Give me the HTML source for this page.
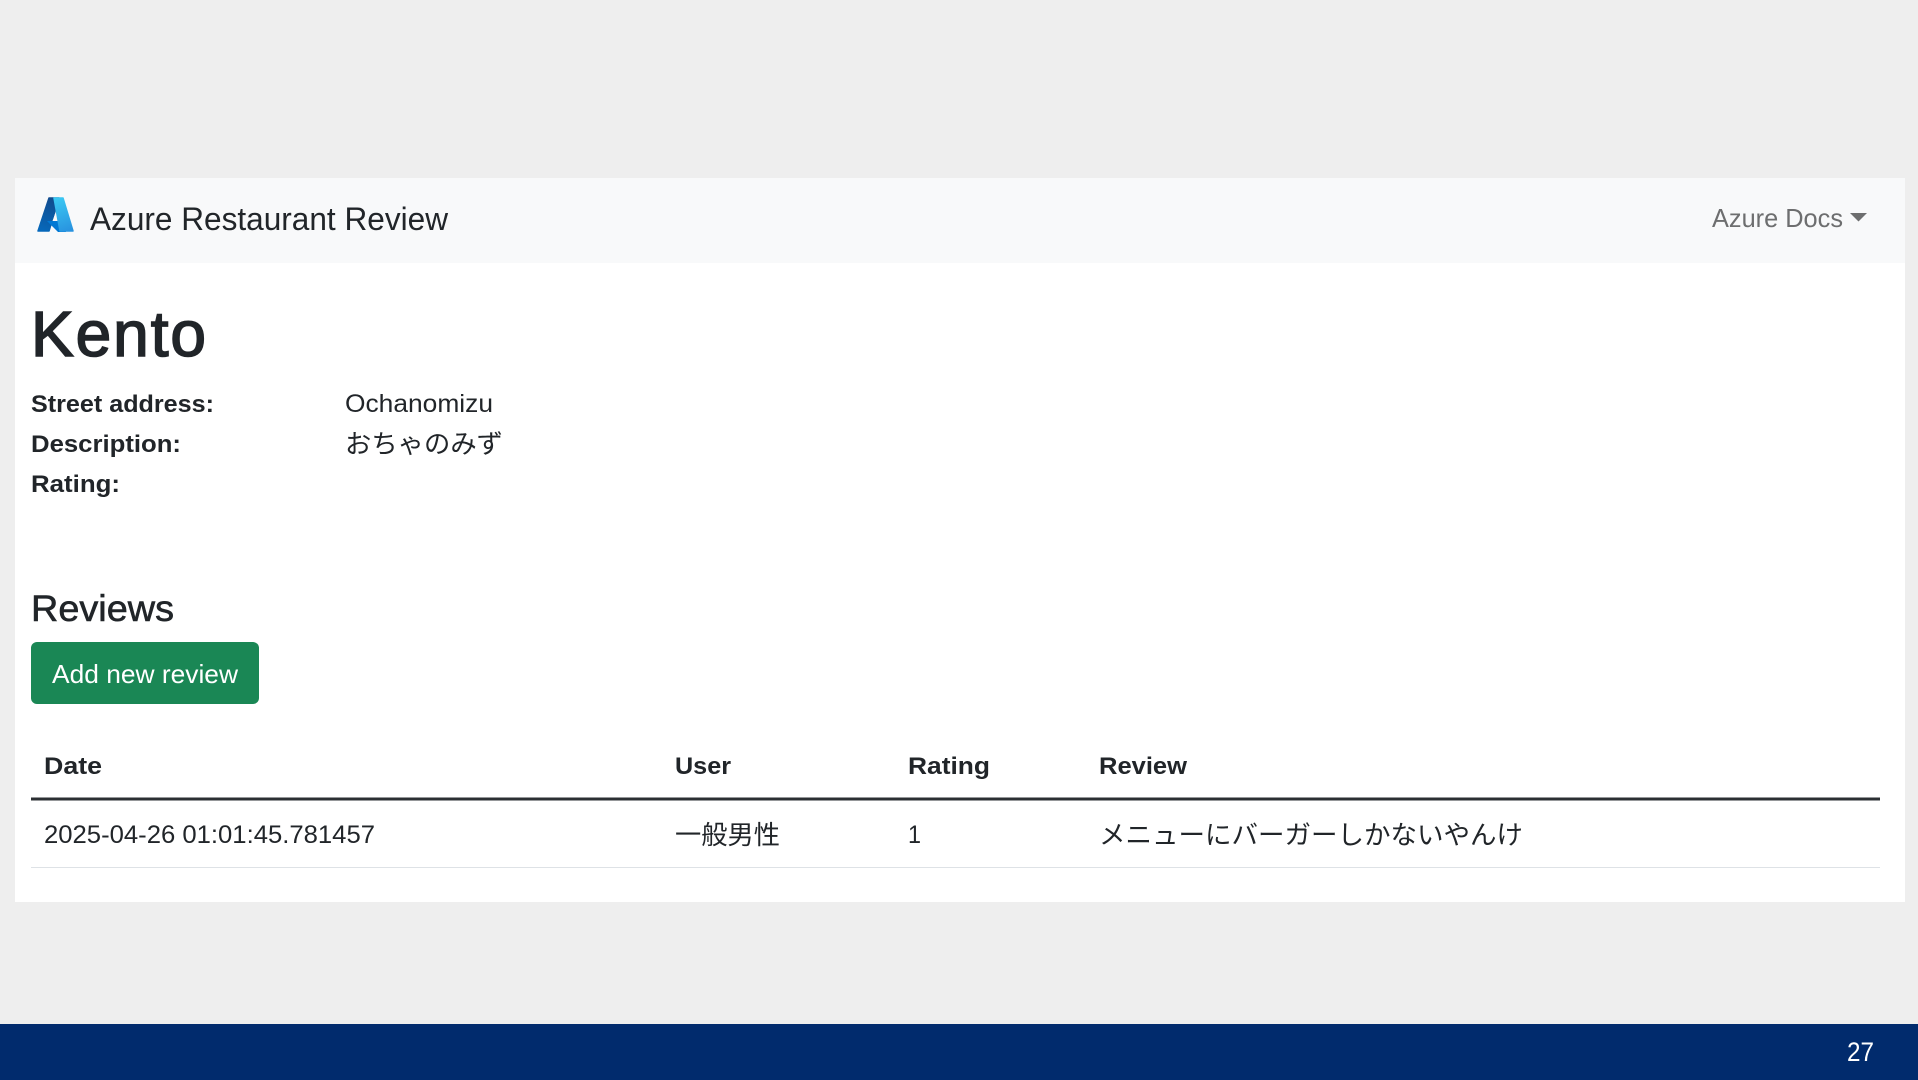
<!DOCTYPE html>
<html lang="ja"><head><meta charset="utf-8"><title>Azure Restaurant Review</title>
<style>
html,body{margin:0;padding:0;width:1918px;height:1080px;overflow:hidden;background:#eee}
svg{display:block}
text{font-family:"Liberation Sans","Noto Sans CJK JP",sans-serif;fill:#212529}
.j{font-family:"Liberation Sans","Noto Sans CJK JP",sans-serif}
.b{font-weight:700}
</style></head><body>
<svg width="1918" height="1080" viewBox="0 0 1918 1080" xmlns="http://www.w3.org/2000/svg">
<defs>
<linearGradient id="a" x1="54" y1="197" x2="42" y2="232" gradientUnits="userSpaceOnUse"><stop offset="0" stop-color="#114a8b"/><stop offset="1" stop-color="#0669bc"/></linearGradient>
<linearGradient id="d" x1="55" y1="197" x2="68" y2="232" gradientUnits="userSpaceOnUse"><stop offset="0" stop-color="#3ccbf4"/><stop offset="1" stop-color="#2892df"/></linearGradient>
</defs>
<rect width="1918" height="1080" fill="#eeeeee"/>
<rect x="15" y="178" width="1890" height="724" fill="#fff"/>
<rect x="15" y="178" width="1890" height="85" fill="#f8f9fa"/>
<path d="M49 198h10L49 231H38z" fill="url(#a)" stroke="url(#a)" stroke-width="1.500" stroke-linejoin="round"/>
<path d="M47 221h14l5 11h-8z" fill="#0078d4"/>
<path d="M54 198h9L73 231H60z" fill="url(#d)" stroke="url(#d)" stroke-width="1.500" stroke-linejoin="round"/>
<path d="M52.500 221h4.500L55 214z" fill="#f8f9fa"/>
<text x="90" y="230" font-size="32" textLength="358" lengthAdjust="spacingAndGlyphs">Azure Restaurant Review</text>
<text x="1712" y="227" font-size="26" textLength="131" lengthAdjust="spacingAndGlyphs" style="fill:#6d6e6f">Azure Docs</text>
<path d="M1850 213h17l-8.500 8.500z" fill="#6d6e6f"/>
<text x="31" y="356" font-size="64" textLength="175" lengthAdjust="spacing" stroke="#212529" stroke-width="1.600">Kento</text>
<text class="b" x="31" y="412" font-size="24.500" textLength="183" lengthAdjust="spacingAndGlyphs">Street address:</text>
<text class="b" x="31" y="452" font-size="24.500" textLength="150" lengthAdjust="spacingAndGlyphs">Description:</text>
<text class="b" x="31" y="492" font-size="24.500" textLength="89" lengthAdjust="spacingAndGlyphs">Rating:</text>
<text x="345" y="412" font-size="25" textLength="148" lengthAdjust="spacingAndGlyphs">Ochanomizu</text>
<text class="j" x="345" y="453" font-size="26" textLength="158" lengthAdjust="spacingAndGlyphs">おちゃのみず</text>
<text x="31" y="621" font-size="37" textLength="143" lengthAdjust="spacingAndGlyphs" stroke="#212529" stroke-width=".6">Reviews</text>
<rect x="31" y="642" width="228" height="62" rx="6" fill="#1a8755"/>
<text x="52" y="683" font-size="26" textLength="186" lengthAdjust="spacingAndGlyphs" style="fill:#fff">Add new review</text>
<text class="b" x="44" y="774" font-size="24.500" textLength="58" lengthAdjust="spacingAndGlyphs">Date</text>
<text class="b" x="675" y="774" font-size="24.500" textLength="56" lengthAdjust="spacingAndGlyphs">User</text>
<text class="b" x="908" y="774" font-size="24.500" textLength="82" lengthAdjust="spacingAndGlyphs">Rating</text>
<text class="b" x="1099" y="774" font-size="24.500" textLength="88" lengthAdjust="spacingAndGlyphs">Review</text>
<rect x="31" y="797.500" width="1849" height="3" fill="#2b2f33"/>
<text x="44" y="843" font-size="25" textLength="331" lengthAdjust="spacingAndGlyphs">2025-04-26 01:01:45.781457</text>
<text class="j" x="675" y="844" font-size="26" textLength="105" lengthAdjust="spacingAndGlyphs">一般男性</text>
<text x="908" y="843" font-size="25" textLength="13" lengthAdjust="spacingAndGlyphs">1</text>
<text class="j" x="1099" y="844" font-size="26" textLength="424" lengthAdjust="spacingAndGlyphs">メニューにバーガーしかないやんけ</text>
<rect x="31" y="867" width="1849" height="1" fill="#dee2e6"/>
<rect x="0" y="1024" width="1918" height="56" fill="#012b6d"/>
<text x="1847" y="1061" font-size="27" textLength="27" lengthAdjust="spacingAndGlyphs" style="fill:#fff">27</text>
</svg>
</body></html>
